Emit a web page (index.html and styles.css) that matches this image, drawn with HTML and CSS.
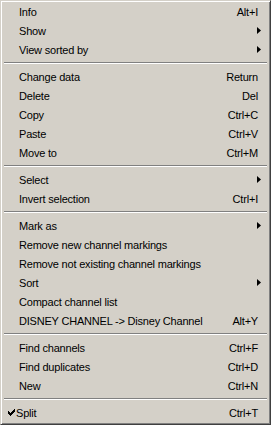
FILE: index.html
```html
<!DOCTYPE html>
<html lang="en">
<head>
  <meta charset="UTF-8">
  <title>Channel menu</title>
  <link rel="stylesheet" href="styles.css">
</head>
<body>
  <div class="menu">
    <div class="item"><span class="label">Info</span><span class="key">Alt+I</span></div>
    <div class="item"><span class="label">Show</span><svg class="arrow" width="4" height="7" viewBox="0 0 4 7"><polygon points="0,0 4,3.5 0,7"/></svg></div>
    <div class="item"><span class="label">View sorted by</span><svg class="arrow" width="4" height="7" viewBox="0 0 4 7"><polygon points="0,0 4,3.5 0,7"/></svg></div>
    <div class="sep"></div>
    <div class="item"><span class="label">Change data</span><span class="key">Return</span></div>
    <div class="item"><span class="label">Delete</span><span class="key">Del</span></div>
    <div class="item"><span class="label">Copy</span><span class="key">Ctrl+C</span></div>
    <div class="item"><span class="label">Paste</span><span class="key">Ctrl+V</span></div>
    <div class="item"><span class="label">Move to</span><span class="key">Ctrl+M</span></div>
    <div class="sep"></div>
    <div class="item"><span class="label">Select</span><svg class="arrow" width="4" height="7" viewBox="0 0 4 7"><polygon points="0,0 4,3.5 0,7"/></svg></div>
    <div class="item"><span class="label">Invert selection</span><span class="key">Ctrl+I</span></div>
    <div class="sep"></div>
    <div class="item"><span class="label">Mark as</span><svg class="arrow" width="4" height="7" viewBox="0 0 4 7"><polygon points="0,0 4,3.5 0,7"/></svg></div>
    <div class="item"><span class="label">Remove new channel markings</span></div>
    <div class="item"><span class="label">Remove not existing channel markings</span></div>
    <div class="item"><span class="label">Sort</span><svg class="arrow" width="4" height="7" viewBox="0 0 4 7"><polygon points="0,0 4,3.5 0,7"/></svg></div>
    <div class="item"><span class="label">Compact channel list</span></div>
    <div class="item"><span class="label">DISNEY CHANNEL -&gt; Disney Channel</span><span class="key">Alt+Y</span></div>
    <div class="sep"></div>
    <div class="item"><span class="label">Find channels</span><span class="key">Ctrl+F</span></div>
    <div class="item"><span class="label">Find duplicates</span><span class="key">Ctrl+D</span></div>
    <div class="item"><span class="label">New</span><span class="key">Ctrl+N</span></div>
    <div class="sep"></div>
    <div class="item checked">
      <svg class="check" width="7" height="7" viewBox="0 0 7 7"><path d="M0 2h1v1h1v1h1v-1h1v-1h1v-1h1v-1h1v3h-1v1h-1v1h-1v1h-1v1h-1v-1h-1v-1h-1z"/></svg>
      <span class="label">Split</span><span class="key">Ctrl+T</span>
    </div>
  </div>
</body>
</html>
```

FILE: styles.css
```css
body {
  margin: 0;
  background: #d4d0c8;
}
.menu {
  width: 271px;
  height: 425px;
  box-sizing: border-box;
  background: #d4d0c8;
  border: 1px solid;
  border-color: #d4d0c8 #404040 #404040 #d4d0c8;
  box-shadow: inset 1px 1px 0 #ffffff, inset -1px -1px 0 #808080;
  padding: 1px 1px 2px 1px;
  font-family: "Liberation Sans", Arial, sans-serif;
  font-size: 11px;
  letter-spacing: -0.2px;
  color: #000000;
}
.item {
  display: flex;
  align-items: center;
  height: 19px;
  padding: 0 11px 0 17px;
}
.label {
  flex: 1;
  white-space: nowrap;
}
.key {
  white-space: nowrap;
}
.arrow {
  margin-right: -3px;
  fill: #000000;
}
.checked {
  padding-left: 6px;
}
.check {
  fill: #000000;
  margin-right: 1px;
}
.sep {
  height: 8px;
  margin: 0 2px;
  display: flex;
  flex-direction: column;
  justify-content: center;
}
.sep::before {
  content: "";
  display: block;
  height: 1px;
  background: #808080;
  border-bottom: 1px solid #ffffff;
}
```
